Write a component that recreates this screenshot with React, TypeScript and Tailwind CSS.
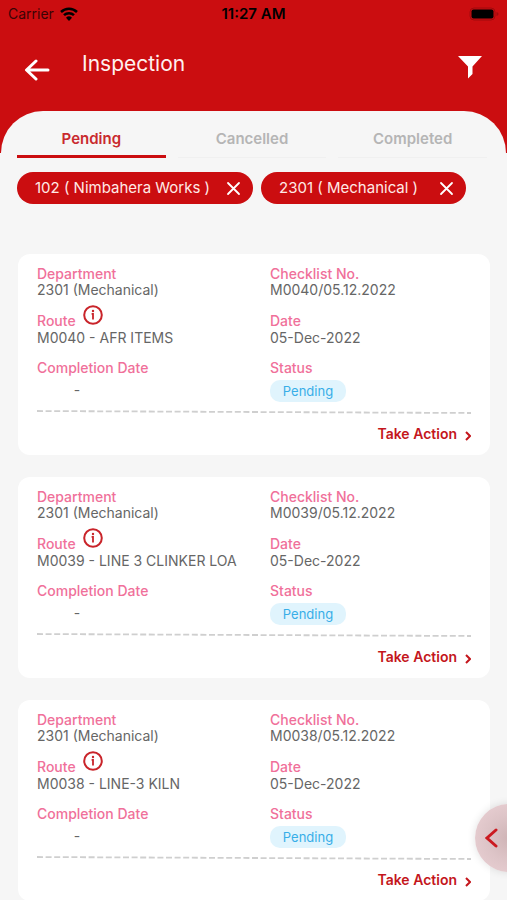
import { useState } from "react";

type Inspection = {
  department: string;
  checklist: string;
  route: string;
  date: string;
  completion: string;
  status: string;
};

const inspections: Inspection[] = [
  { department: "2301 (Mechanical)", checklist: "M0040/05.12.2022", route: "M0040 - AFR ITEMS", date: "05-Dec-2022", completion: "-", status: "Pending" },
  { department: "2301 (Mechanical)", checklist: "M0039/05.12.2022", route: "M0039 - LINE 3 CLINKER LOA", date: "05-Dec-2022", completion: "-", status: "Pending" },
  { department: "2301 (Mechanical)", checklist: "M0038/05.12.2022", route: "M0038 - LINE-3 KILN", date: "05-Dec-2022", completion: "-", status: "Pending" },
];

const tabs = ["Pending", "Cancelled", "Completed"];

function StatusBar() {
  return (
    <div className="grid h-7 grid-cols-3 items-center px-2 text-black">
      <div className="flex items-center gap-1.5 text-sm text-[#3a0405]">
        <span>Carrier</span>
        <svg width="18" height="14" viewBox="0 0 18 14" fill="none" stroke="#000" strokeWidth="2.5" aria-hidden="true">
          <path d="M1 5a11.5 11.5 0 0 1 16 0" />
          <path d="M4 8.2a7.2 7.2 0 0 1 10 0" />
          <path d="M9 14 6 10.8a4.3 4.3 0 0 1 6 0z" fill="#000" stroke="none" />
        </svg>
      </div>
      <span className="text-center text-[15px] font-semibold">11:27 AM</span>
      <svg className="justify-self-end" width="30" height="14" viewBox="0 0 30 14" aria-hidden="true">
        <rect x="1" y="1" width="25" height="12" rx="4" fill="none" stroke="#a00a0d" />
        <rect x="2.500" y="2.500" width="22" height="9" rx="2" fill="#000" />
        <path d="M27.500 5v4q2-.5 2-2t-2-2z" fill="#a00a0d" />
      </svg>
    </div>
  );
}

function Chip({ label }: { label: string }) {
  return (
    <div className="flex h-8 min-w-[205px] items-center justify-between gap-4 rounded-full bg-[#cb0d10] pr-3 pl-[18px] text-[15px] whitespace-nowrap text-[#ffe9e6]">
      <span>{label}</span>
      <button type="button" aria-label={`Remove ${label}`}>
        <svg width="15" height="15" viewBox="0 0 15 15" stroke="#fff" strokeWidth="1.8" strokeLinecap="round" aria-hidden="true">
          <path d="m2 2 11 11M13 2 2 13" />
        </svg>
      </button>
    </div>
  );
}

function Label({ children }: { children: string }) {
  return <dt className="text-sm leading-4 font-medium text-[#f0709a]">{children}</dt>;
}

function Card({ item }: { item: Inspection }) {
  return (
    <article className="rounded-xl bg-white px-[19px] pt-3 pb-[11px]">
      <dl className="grid grid-cols-2 gap-x-8 text-sm leading-4 text-[#666]">
        <div className="h-[47px]">
          <Label>Department</Label>
          <dd>{item.department}</dd>
        </div>
        <div className="h-[47px]">
          <Label>Checklist No.</Label>
          <dd>{item.checklist}</dd>
        </div>
        <div className="h-[47px]">
          <div className="relative">
            <Label>Route</Label>
            <button type="button" aria-label="Route details" className="absolute -top-2 left-[46px]">
              <svg width="20" height="20" viewBox="0 0 20 20" fill="none" stroke="#c9242a" aria-hidden="true">
                <circle cx="10" cy="10" r="8.800" strokeWidth="2" />
                <path d="M8.600 8.800H10V14.500" strokeWidth="1.800" />
                <circle cx="10" cy="6" r="1.200" fill="#c9242a" stroke="none" />
              </svg>
            </button>
          </div>
          <dd className="pt-px whitespace-nowrap">{item.route}</dd>
        </div>
        <div className="h-[47px]">
          <Label>Date</Label>
          <dd className="pt-px">{item.date}</dd>
        </div>
        <div>
          <Label>Completion Date</Label>
          <dd className="w-20 pt-1.5 text-center">{item.completion}</dd>
        </div>
        <div>
          <Label>Status</Label>
          <dd className="mt-1 flex h-[22px] w-[76px] items-center justify-center rounded-[10px] bg-[#e0f4fd] text-[13px] text-[#38aee8]">
            {item.status}
          </dd>
        </div>
      </dl>
      <svg className="mt-2 block h-1 w-full" viewBox="0 0 434 4" preserveAspectRatio="none" aria-hidden="true">
        <path d="M0 1 434 3" stroke="#cfcfcf" strokeWidth="1.800" strokeDasharray="6 2.600" />
      </svg>
      <div className="mt-2.5 flex justify-end">
        <button type="button" className="flex items-center gap-2 text-sm leading-5 font-semibold text-[#c4161c]">
          Take Action
          <svg className="mt-1" width="6" height="10" viewBox="0 0 6 10" fill="none" stroke="#c4161c" strokeWidth="2" aria-hidden="true">
            <path d="m1 1 4 4-4 4" />
          </svg>
        </button>
      </div>
    </article>
  );
}

export default function App() {
  const [active, setActive] = useState("Pending");
  return (
    <div className="relative flex h-screen flex-col overflow-hidden bg-[#f6f6f6] font-['Inter','Liberation_Sans',sans-serif]">
      <header className="h-[153px] shrink-0 bg-[#cb0d10]">
        <StatusBar />
        <div className="flex h-[83px] items-center px-6">
          <button type="button" aria-label="Back">
            <svg width="26" height="22" viewBox="0 0 26 22" fill="none" stroke="#fff" strokeWidth="3" strokeLinecap="round" strokeLinejoin="round" aria-hidden="true">
              <path d="M24 11H3M12 2 2.500 11l9.500 9" />
            </svg>
          </button>
          <h1 className="ml-8 pb-3 text-[21px] leading-7 text-[#fff0ef]">Inspection</h1>
          <button type="button" aria-label="Filter" className="mr-px ml-auto pb-1">
            <svg width="24" height="23" viewBox="0 0 24 23" fill="#fff" aria-hidden="true">
              <path d="M0 0h24l-9.500 10.500V18L10 22.500v-12z" />
            </svg>
          </button>
        </div>
        <div className="mx-px h-[42px] rounded-t-[44px] bg-[#f6f6f6] pt-4 pr-[19px] pl-4">
          <div role="tablist" className="grid h-[31px] grid-cols-3 gap-x-3">
            {tabs.map((tab) => (
              <button
                key={tab}
                type="button"
                role="tab"
                aria-selected={active === tab}
                onClick={() => setActive(tab)}
                className={
                  active === tab
                    ? "border-b-[3px] border-[#cb0d10] pb-1 text-[15px] font-semibold text-[#c92a2e]"
                    : "border-b border-[#f0f0f0] pb-1.5 text-[15px] font-semibold text-[#b5b5b5]"
                }
              >
                {tab}
              </button>
            ))}
          </div>
        </div>
      </header>
      <main className="px-[17px] pt-[19px]">
        <div className="flex gap-2">
          <Chip label="102 ( Nimbahera Works )" />
          <Chip label="2301 ( Mechanical )" />
        </div>
        <div className="mt-[50px] ml-px flex flex-col gap-[22px]">
          {inspections.map((item) => (
            <Card key={item.checklist} item={item} />
          ))}
        </div>
      </main>
      <button
        type="button"
        aria-label="Open panel"
        className="absolute -right-9 bottom-7 flex size-[68px] items-center rounded-full bg-[radial-gradient(circle,#cfb4b6_0%,#ddc4c7_45%,#ecd2d6_100%)] pl-2.5 shadow-[0_0_8px_rgba(0,0,0,0.12)]"
      >
        <svg width="13" height="20" viewBox="0 0 13 20" fill="none" stroke="#cb1a20" strokeWidth="3" strokeLinecap="round" aria-hidden="true">
          <path d="M11 2 2 10l9 8" />
        </svg>
      </button>
    </div>
  );
}
